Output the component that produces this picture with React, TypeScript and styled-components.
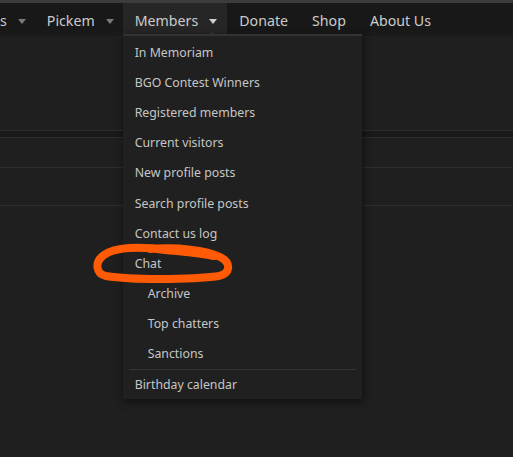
import styled, { createGlobalStyle } from 'styled-components';

const GlobalStyle = createGlobalStyle`
  html, body {
    margin: 0;
    padding: 0;
    background: #1f1f1f;
    overflow: hidden;
  }
  body {
    font-family: 'Noto Sans', 'Open Sans', sans-serif;
    color: #c8c8c8;
  }
`;

const Page = styled.div`
  position: relative;
  min-height: 457px;
`;

const TopStrip = styled.div`
  height: 3px;
  background: #3c3c3c;
`;

const NavBar = styled.nav`
  height: 33px;
  display: flex;
  align-items: stretch;
  background: linear-gradient(#181818, #181818 80%, #1b1b1b);
`;

const NavItem = styled.div<{ $active?: boolean; $first?: boolean }>`
  position: relative;
  display: flex;
  align-items: center;
  gap: 11px;
  padding: 1px ${(p) => (p.$active ? 10 : 9)}px 0 ${(p) => (p.$first ? 0 : 12)}px;
  font-size: 14.2px;
  color: #cbcbcb;
  background: ${(p) => (p.$active ? '#262626' : 'transparent')};
`;

const PlainItem = styled(NavItem)`
  padding-right: 12px;
`;

const Caret = styled.span<{ $active?: boolean }>`
  width: 0;
  height: 0;
  border-left: 4px solid transparent;
  border-right: 4px solid transparent;
  border-top: 5px solid ${(p) => (p.$active ? '#d0d0d0' : '#7a7a7a')};
  margin-top: 2px;
`;

const Notch = styled.span`
  position: absolute;
  right: 10px;
  bottom: 0;
  width: 0;
  height: 0;
  border-left: 5px solid transparent;
  border-right: 5px solid transparent;
  border-bottom: 5px solid #333;
`;

const Menu = styled.div`
  position: absolute;
  top: 31px;
  left: 0;
  width: 239px;
  z-index: 5;
  background: #202020;
  border-top: 2px solid #333;
  padding-top: 1px;
  box-shadow: 0 4px 8px rgba(0, 0, 0, 0.35), 3px 0 6px rgba(0, 0, 0, 0.2);
`;

const MenuLink = styled.div<{ $sub?: boolean }>`
  height: 30.2px;
  display: flex;
  align-items: center;
  padding-left: ${(p) => (p.$sub ? 25 : 12)}px;
  font-size: 12.3px;
  color: #c6c6c6;
  white-space: nowrap;
`;

const LastLink = styled(MenuLink)`
  height: 29px;
`;

const Separator = styled.div`
  height: 1px;
  margin: 0 6px;
  background: #343434;
`;

const Body = styled.div`
  display: flex;
  flex-direction: column;
`;

const HeaderArea = styled.div`
  height: 94px;
`;

const Rule = styled.div`
  height: 1px;
  background: #2d2d2d;
`;

const Band = styled.div`
  height: 6px;
  background: #191919;
`;

const Row = styled.div<{ $h: number }>`
  height: ${(p) => p.$h}px;
`;

const Annotation = styled.svg`
  position: absolute;
  left: 0;
  top: 0;
  width: 513px;
  height: 457px;
  z-index: 10;
  pointer-events: none;
`;

const membersLinks = [
  'In Memoriam',
  'BGO Contest Winners',
  'Registered members',
  'Current visitors',
  'New profile posts',
  'Search profile posts',
  'Contact us log',
  'Chat',
];

const chatLinks = ['Archive', 'Top chatters', 'Sanctions'];

export default function App() {
  return (
    <Page>
      <GlobalStyle />
      <TopStrip />
      <NavBar>
        <NavItem $first>
          s<Caret />
        </NavItem>
        <NavItem>
          Pickem<Caret />
        </NavItem>
        <NavItem $active>
          Members<Caret $active />
          <Notch />
          <Menu>
            {membersLinks.map((l) => (
              <MenuLink key={l}>{l}</MenuLink>
            ))}
            {chatLinks.map((l) => (
              <MenuLink key={l} $sub>
                {l}
              </MenuLink>
            ))}
            <Separator />
            <LastLink>Birthday calendar</LastLink>
          </Menu>
        </NavItem>
        <PlainItem>Donate</PlainItem>
        <PlainItem>Shop</PlainItem>
        <PlainItem>About Us</PlainItem>
      </NavBar>
      <Body>
        <HeaderArea />
        <Rule />
        <Band />
        <Rule />
        <Row $h={29} />
        <Rule />
        <Row $h={37} />
        <Rule />
      </Body>
      <Annotation viewBox="0 0 513 457">
        <path
          d="M150 249 C 178 247, 206 250, 220 257 C 232 263, 230 274, 219 276 C 190 280, 130 280, 106 276 C 96 274, 94 262, 104 255 C 115 247, 140 246, 165 250 C 185 252, 200 253, 214 256"
          fill="none"
          stroke="#ff5a06"
          strokeWidth={8}
          strokeLinecap="round"
          strokeLinejoin="round"
        />
      </Annotation>
    </Page>
  );
}
